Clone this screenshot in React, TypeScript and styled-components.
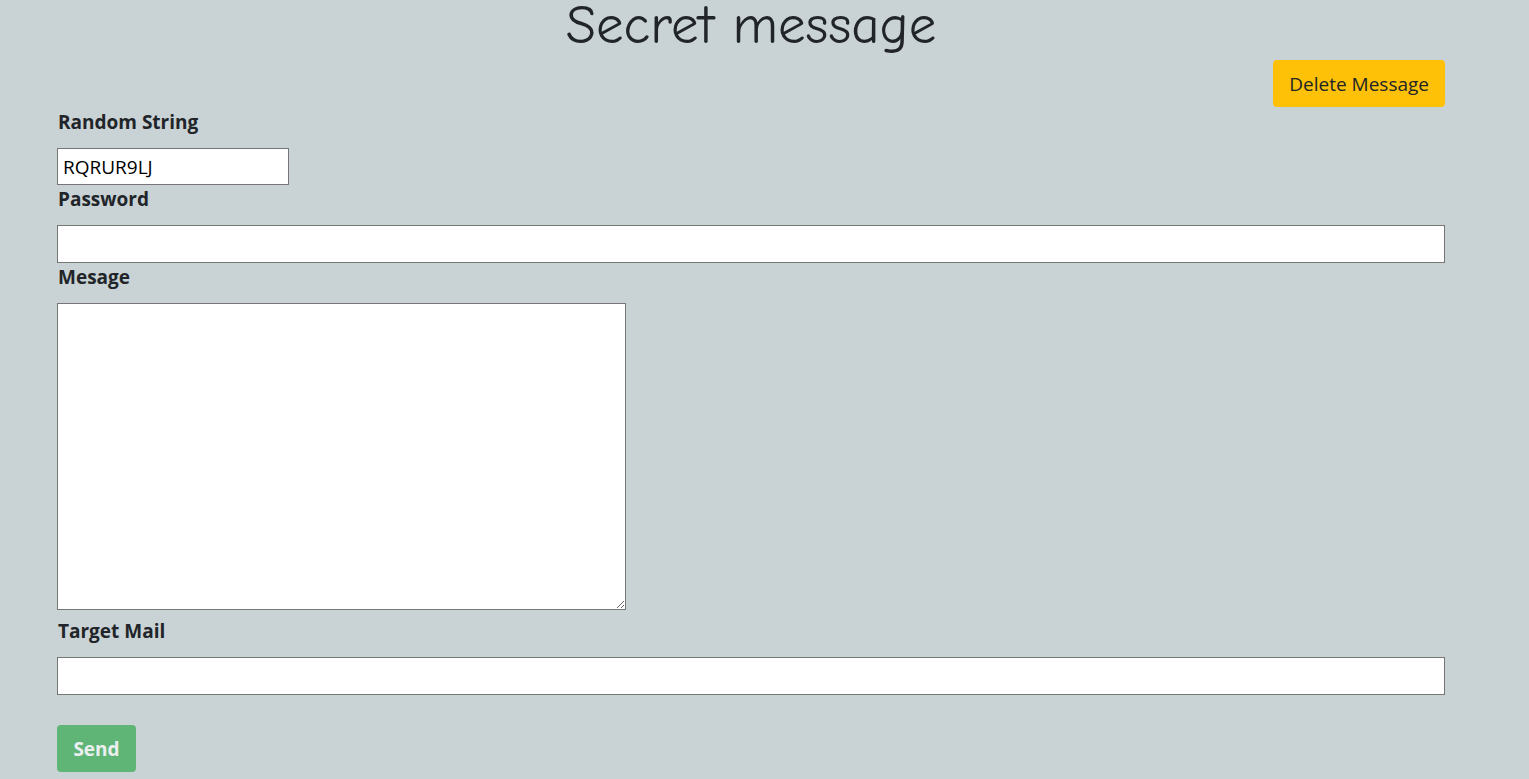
import React from "react";
import styled, { createGlobalStyle } from "styled-components";

const Global = createGlobalStyle`
  html, body { margin: 0; padding: 0; }
  body {
    background: #c9d2d4;
    font-family: "Open Sans", "Noto Sans", sans-serif;
    color: #212529;
  }
`;

const Page = styled.div`
  width: 1388px;
  margin-left: 57px;
  display: flex;
  flex-direction: column;
`;

const Title = styled.h1`
  margin: 0;
  height: 60px;
  text-align: center;
  font-family: "Comic Sans MS", "Comic Neue", "DejaVu Sans", sans-serif;
  font-weight: 400;
  font-size: 55px;
  line-height: 50px;
  color: #212529;
`;

const TopBar = styled.div`
  display: flex;
  justify-content: flex-end;
`;

const Button = styled.button<{ $variant: "warning" | "success"; $disabled?: boolean }>`
  border: none;
  border-radius: 4px;
  height: 47px;
  padding: 0 16px;
  font-family: "Open Sans", "Noto Sans", sans-serif;
  font-size: 19px;
  font-weight: ${(p) => (p.$variant === "warning" ? 400 : 700)};
  background: ${(p) => (p.$variant === "warning" ? "#ffc107" : "#28a745")};
  color: ${(p) => (p.$variant === "warning" ? "#212529" : "#ffffff")};
  opacity: ${(p) => (p.$disabled ? 0.65 : 1)};
  cursor: pointer;
`;

const Form = styled.form`
  display: flex;
  flex-direction: column;
  align-items: flex-start;
  margin-top: 1px;
`;

const Label = styled.label`
  display: block;
  font-weight: 700;
  font-size: 19px;
  line-height: 29px;
  height: 40px;
  padding-left: 1px;
`;

const Input = styled.input<{ $width?: number }>`
  box-sizing: border-box;
  width: ${(p) => (p.$width ? `${p.$width}px` : "100%")};
  height: ${(p) => (p.$width ? 37 : 38)}px;
  margin: 0;
  border: 1px solid #767676;
  background: #fff;
  padding: 0 5px;
  font-family: "Open Sans", "Noto Sans", sans-serif;
  font-size: 19px;
  color: #000;
  outline: none;
`;

const TextArea = styled.textarea`
  box-sizing: border-box;
  width: 569px;
  height: 307px;
  margin: 0 0 7px;
  border: 1px solid #767676;
  background: #fff;
  resize: both;
  font-family: "Open Sans", sans-serif;
  font-size: 16px;
`;

const SendRow = styled.div`
  margin-top: 30px;
`;

export default function App() {
  return (
    <>
      <Global />
      <Page>
        <Title>Secret message</Title>
        <TopBar>
          <Button type="button" $variant="warning">Delete Message</Button>
        </TopBar>
        <Form onSubmit={(e) => e.preventDefault()}>
          <Label>Random String</Label>
          <Input $width={232} defaultValue="RQRUR9LJ" />
          <Label>Password</Label>
          <Input type="password" />
          <Label>Mesage</Label>
          <TextArea />
          <Label>Target Mail</Label>
          <Input type="email" />
          <SendRow>
            <Button type="submit" $variant="success" $disabled style={{ width: 79 }}>Send</Button>
          </SendRow>
        </Form>
      </Page>
    </>
  );
}
